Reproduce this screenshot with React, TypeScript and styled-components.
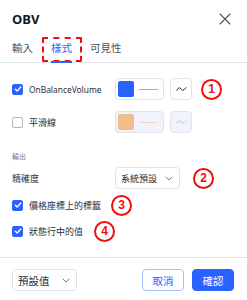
import React from "react";
import styled, { createGlobalStyle } from "styled-components";

const GlobalStyle = createGlobalStyle`
  html, body {
    margin: 0;
    padding: 0;
    background: #ffffff;
  }
  body {
    font-family: "Noto Sans", "Noto Sans CJK TC", sans-serif;
    color: #131722;
  }
`;

const BLUE = "#2962ff";
const RED = "#f20d0d";
const TEXT = "#2a2e39";

const Dialog = styled.div`
  width: 247px;
  height: 300px;
  display: flex;
  flex-direction: column;
  background: #fff;
  overflow: hidden;
`;

const Header = styled.div`
  height: 37px;
  padding: 0 12px;
  display: flex;
  align-items: center;
  justify-content: space-between;
`;

const Title = styled.div`
  font-size: 13px;
  font-weight: 700;
  padding-top: 1px;
`;

const Close = styled.div`
  width: 12px;
  height: 12px;
  display: flex;
  margin-right: 4px;
`;

const Tabs = styled.div`
  height: 25px;
  padding: 0 12px;
  display: flex;
  gap: 18px;
  border-bottom: 1px solid #e0e3eb;
`;

const Tab = styled.div<{ $active?: boolean }>`
  position: relative;
  font-family: "Noto Sans CJK TC", sans-serif;
  font-size: 10.5px;
  line-height: 22px;
  color: ${(p) => (p.$active ? BLUE : "#50535e")};
  &::after {
    content: "";
    display: ${(p) => (p.$active ? "block" : "none")};
    position: absolute;
    left: 0;
    right: 0;
    bottom: -1px;
    height: 2px;
    background: ${BLUE};
  }
`;

const DashedMark = styled.div`
  position: absolute;
  left: -9px;
  right: -10px;
  top: 0;
  bottom: 0;
  border: 2px dashed ${RED};
  border-radius: 2px;
`;

const Body = styled.div`
  flex: 1;
  padding: 0 12px;
  display: flex;
  flex-direction: column;
`;

const Row = styled.div<{ $top: number }>`
  display: flex;
  align-items: center;
  height: 22px;
  margin-top: ${(p) => p.$top}px;
`;

const CheckLabel = styled.label<{ $width?: number }>`
  display: flex;
  align-items: center;
  gap: 6px;
  width: ${(p) => (p.$width ? `${p.$width}px` : "auto")};
  font-family: "Noto Sans", "Noto Sans CJK TC", sans-serif;
  font-size: 9px;
  color: ${TEXT};
`;

const LatinText = styled.span`
  font-size: 8.4px;
`;

const Box = styled.span<{ $checked?: boolean }>`
  width: 11px;
  height: 11px;
  box-sizing: border-box;
  border-radius: 2px;
  flex: none;
  display: flex;
  align-items: center;
  justify-content: center;
  background: ${(p) => (p.$checked ? BLUE : "#fff")};
  border: 1px solid ${(p) => (p.$checked ? BLUE : "#b2b5be")};
`;

const ColorButton = styled.div<{ $disabled?: boolean }>`
  width: 49px;
  height: 22px;
  box-sizing: border-box;
  border: 1px solid #e0e3eb;
  border-radius: 4px;
  display: flex;
  align-items: center;
  padding-left: 2px;
  gap: 5px;
  background: ${(p) => (p.$disabled ? "#f0f3fa" : "#fff")};
`;

const Swatch = styled.span<{ $color: string }>`
  width: 16px;
  height: 16px;
  border-radius: 2px;
  background: ${(p) => p.$color};
`;

const Line = styled.span<{ $color: string }>`
  width: 19px;
  height: 1px;
  background: ${(p) => p.$color};
`;

const IconButton = styled.div<{ $disabled?: boolean }>`
  width: 22px;
  height: 22px;
  box-sizing: border-box;
  margin-left: 6px;
  border: 1px solid #e0e3eb;
  border-radius: 4px;
  display: flex;
  align-items: center;
  justify-content: center;
  background: ${(p) => (p.$disabled ? "#f0f3fa" : "#fff")};
`;

const Badge = styled.span<{ $gap: number }>`
  width: 17px;
  height: 17px;
  margin-left: ${(p) => p.$gap}px;
  border: 2px solid ${RED};
  border-radius: 50%;
  display: flex;
  align-items: center;
  justify-content: center;
  color: ${RED};
  font-family: "Liberation Sans", Arial, sans-serif;
  font-weight: 700;
  font-size: 12px;
  line-height: 1;
`;

const SectionLabel = styled.div`
  margin-top: 18px;
  font-family: "Noto Sans CJK TC", sans-serif;
  font-size: 7px;
  line-height: 10px;
  color: #787b86;
`;

const FieldLabel = styled.div`
  width: 103px;
  font-family: "Noto Sans CJK TC", sans-serif;
  font-size: 9px;
  color: ${TEXT};
`;

const Select = styled.div<{ $width: number; $size: number }>`
  width: ${(p) => p.$width}px;
  height: 22px;
  box-sizing: border-box;
  border: 1px solid #e0e3eb;
  border-radius: 4px;
  display: flex;
  align-items: center;
  justify-content: space-between;
  padding: 0 6px 0 5px;
  font-family: "Noto Sans CJK TC", sans-serif;
  font-size: ${(p) => p.$size}px;
  color: ${TEXT};
`;

const Footer = styled.div`
  height: 43px;
  box-sizing: border-box;
  border-top: 1px solid #e0e3eb;
  padding: 11px 13px 0 12px;
  display: flex;
  align-items: flex-start;
  justify-content: space-between;
`;

const Buttons = styled.div`
  display: flex;
  gap: 8px;
`;

const Button = styled.div<{ $primary?: boolean }>`
  width: 42px;
  height: 22px;
  box-sizing: border-box;
  border-radius: 4px;
  display: flex;
  align-items: center;
  justify-content: center;
  font-family: "Noto Sans CJK TC", sans-serif;
  font-size: 10.5px;
  color: ${(p) => (p.$primary ? "#fff" : BLUE)};
  background: ${(p) => (p.$primary ? BLUE : "#fff")};
  border: 1px solid ${(p) => (p.$primary ? BLUE : "#a8bfff")};
`;

const Check = () => (
  <svg width="8" height="8" viewBox="0 0 8 8">
    <path d="M1.3 4.2 L3.2 6 L6.8 2" fill="none" stroke="#fff" strokeWidth="1.3" strokeLinecap="round" strokeLinejoin="round" />
  </svg>
);

const Chevron = () => (
  <svg width="8" height="5" viewBox="0 0 8 5">
    <path d="M1 1 L4 4 L7 1" fill="none" stroke="#787b86" strokeWidth="1" strokeLinecap="round" />
  </svg>
);

const Wave = ({ color }: { color: string }) => (
  <svg width="11" height="6" viewBox="0 0 11 6">
    <path d="M1 4.3 C2.3 1.2 3.7 1.2 5 3 C6.3 4.8 7.7 4.8 10 1.7" fill="none" stroke={color} strokeWidth="1" strokeLinecap="round" />
  </svg>
);

export default function App() {
  return (
    <Dialog>
      <GlobalStyle />
      <Header>
        <Title>OBV</Title>
        <Close>
          <svg width="12" height="12" viewBox="0 0 12 12">
            <path d="M1 1 L11 11 M11 1 L1 11" stroke="#50535e" strokeWidth="1.1" strokeLinecap="round" />
          </svg>
        </Close>
      </Header>
      <Tabs>
        <Tab>輸入</Tab>
        <Tab $active>
          樣式
          <DashedMark />
        </Tab>
        <Tab>可見性</Tab>
      </Tabs>
      <Body>
        <Row $top={15}>
          <CheckLabel $width={103}>
            <Box $checked>
              <Check />
            </Box>
            <LatinText>OnBalanceVolume</LatinText>
          </CheckLabel>
          <ColorButton>
            <Swatch $color={BLUE} />
            <Line $color="#8aa8ff" />
          </ColorButton>
          <IconButton>
            <Wave color="#131722" />
          </IconButton>
          <Badge $gap={9}>1</Badge>
        </Row>
        <Row $top={11}>
          <CheckLabel $width={103}>
            <Box />
            平滑線
          </CheckLabel>
          <ColorButton $disabled>
            <Swatch $color="#f3bc8e" />
            <Line $color="#f2d5c2" />
          </ColorButton>
          <IconButton $disabled>
            <Wave color="#c1c4cd" />
          </IconButton>
        </Row>
        <SectionLabel>輸出</SectionLabel>
        <Row $top={6}>
          <FieldLabel>精確度</FieldLabel>
          <Select $width={65} $size={9}>
            系統預設
            <Chevron />
          </Select>
          <Badge $gap={13}>2</Badge>
        </Row>
        <Row $top={5}>
          <CheckLabel>
            <Box $checked>
              <Check />
            </Box>
            價格座標上的標籤
          </CheckLabel>
          <Badge $gap={10}>3</Badge>
        </Row>
        <Row $top={4}>
          <CheckLabel>
            <Box $checked>
              <Check />
            </Box>
            狀態行中的值
          </CheckLabel>
          <Badge $gap={11}>4</Badge>
        </Row>
      </Body>
      <Footer>
        <Select $width={65} $size={10.5}>
          預設值
          <Chevron />
        </Select>
        <Buttons>
          <Button>取消</Button>
          <Button $primary>確認</Button>
        </Buttons>
      </Footer>
    </Dialog>
  );
}
